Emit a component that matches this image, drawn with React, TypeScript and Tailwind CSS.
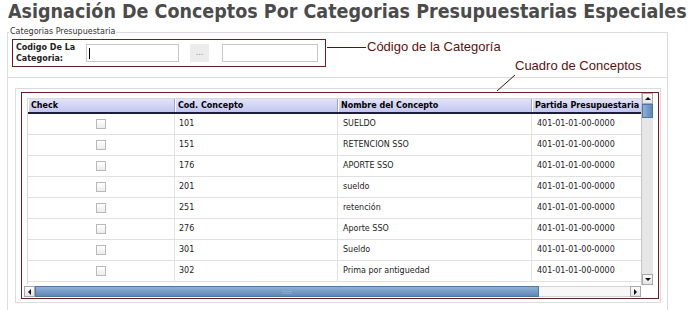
import React from "react";

const rows = [
  { cod: "101", nombre: "SUELDO" },
  { cod: "151", nombre: "RETENCION SSO" },
  { cod: "176", nombre: "APORTE SSO" },
  { cod: "201", nombre: "sueldo" },
  { cod: "251", nombre: "retención" },
  { cod: "276", nombre: "Aporte SSO" },
  { cod: "301", nombre: "Sueldo" },
  { cod: "302", nombre: "Prima por antiguedad" },
];

const headerCell =
  "h-full flex items-center pl-[3px] border-r border-[#9ea2cc] shadow-[inset_1px_0_0_#ffffff] whitespace-nowrap";

const Arrow = ({ dir }: { dir: "up" | "down" | "left" | "right" }) => {
  const pts = {
    up: "1,5 4,2 7,5",
    down: "1,2 4,5 7,2",
    left: "5,1 2,4 5,7",
    right: "2,1 5,4 2,7",
  }[dir];
  return (
    <svg width="8" height="8" viewBox="0 0 8 8">
      <polygon points={pts} fill="#111" />
    </svg>
  );
};

const ScrollBtn = ({ dir }: { dir: "up" | "down" | "left" | "right" }) => (
  <div className="w-[11px] h-[11px] shrink-0 flex items-center justify-center bg-[linear-gradient(#fbfbfb,#e4e4e4)] border border-[#a9a9a9]">
    <Arrow dir={dir} />
  </div>
);

export default function App() {
  return (
    <div
      className="w-[691px] h-[310px] overflow-hidden bg-white text-[#222]"
      style={{ fontFamily: '"DejaVu Sans", Verdana, sans-serif' }}
    >
      <h1
        className="pl-[8px] text-[19.5px] leading-[24px] font-bold text-[#4b4b4b] whitespace-nowrap"
        style={{ fontFamily: '"DejaVu Sans Condensed", "DejaVu Sans", sans-serif' }}
      >
        Asignación De Conceptos Por Categorias Presupuestarias Especiales
      </h1>

      {/* fieldset principal */}
      <div className="relative ml-[7px] mt-[8px] w-[661px] h-[300px] border border-[#dcdcdc]">
        <span className="absolute left-[1px] -top-[6px] bg-white px-[1px] text-[8px] leading-[10px] text-[#333]">
          Categorias Presupuestaria
        </span>

        {/* fila de la categoria */}
        <div className="h-[45px] border-b border-[#dcdcdc] pl-[4px] pt-[6px] flex items-start">
          <div className="w-[314px] h-[28px] border border-[#6e1e1e] flex items-center pl-[3px]">
            <div className="w-[70px] text-[8px] leading-[11px] font-bold text-[#222]">
              Codigo De La
              <br />
              Categoria:
            </div>
            <div className="w-[93px] h-[18px] border border-[#c8c8c8] bg-white flex items-center pl-[2px]">
              <div className="w-[1px] h-[11px] bg-black" />
            </div>
            <div className="ml-[11px] w-[19px] h-[18px] bg-[#ececec] flex items-center justify-center text-[8px] text-[#888]">
              ...
            </div>
            <div className="ml-[13px] w-[96px] h-[18px] border border-[#c8c8c8] bg-white" />
          </div>
          <div
            className="mt-[1px] flex items-center h-[14px] text-[13px] leading-[14px] text-[#5c1212]"
            style={{ fontFamily: '"Liberation Sans", Arial, sans-serif' }}
          >
            <div className="ml-[1px] w-[39px] h-[1px] bg-[#5c1212]" />
            <span className="ml-[1px] whitespace-nowrap">Código de la Categoría</span>
          </div>
        </div>

        {/* callout del cuadro */}
        <span
          className="absolute left-[507px] top-[26px] text-[13px] leading-[14px] text-[#5c1212] whitespace-nowrap"
          style={{ fontFamily: '"Liberation Sans", Arial, sans-serif' }}
        >
          Cuadro de Conceptos
        </span>
        <svg className="absolute left-[488px] top-[41px]" width="20" height="18" viewBox="0 0 20 18">
          <line x1="19" y1="1" x2="1" y2="17" stroke="#3a1010" strokeWidth="1" />
        </svg>

        {/* panel de conceptos */}
        <div className="mt-[10px] ml-[7px] w-[646px] h-[215px] border border-[#dcdcdc] pt-[3px] pl-[5px]">
          <div className="w-[638px] h-[207px] border border-[#6e1e1e]">
            <div className="ml-[2px] w-[629px] flex flex-col">
              <div className="h-[192px] flex">
                {/* cuerpo de la grilla */}
                <div className="w-[617px] pl-[3px] pt-[5px]">
                  <div className="w-[614px] h-[186px] border-l border-t border-[#d8d8d8] overflow-hidden">
                    <div className="h-[15px] flex border-b-2 border-[#1c1c3c] bg-[linear-gradient(#e2e3fa,#c3c6ee)] text-[8px] font-bold text-black">
                      <div className={`${headerCell} w-[147px] shrink-0`}>Check</div>
                      <div className={`${headerCell} w-[163px] shrink-0`}>Cod. Concepto</div>
                      <div className={`${headerCell} w-[194px] shrink-0`}>Nombre del Concepto</div>
                      <div className={`${headerCell} w-[130px] shrink-0`}>Partida Presupuestaria</div>
                    </div>
                    {rows.map((r) => (
                      <div key={r.cod} className="h-[21px] flex border-b border-[#e0e0e0] text-[8px] text-[#222]">
                        <div className="w-[147px] shrink-0 border-r border-[#e4e4e4] flex items-center justify-center">
                          <div className="w-[10px] h-[10px] border border-[#b9b9b9] bg-[linear-gradient(#ffffff,#ececec)]" />
                        </div>
                        <div className="w-[163px] shrink-0 border-r border-[#e4e4e4] flex items-center pl-[4px]">
                          {r.cod}
                        </div>
                        <div className="w-[194px] shrink-0 border-r border-[#e4e4e4] flex items-center pl-[5px] whitespace-nowrap">
                          {r.nombre}
                        </div>
                        <div className="w-[130px] shrink-0 flex items-center pl-[5px] whitespace-nowrap">
                          401-01-01-00-0000
                        </div>
                      </div>
                    ))}
                  </div>
                </div>
                {/* scroll vertical */}
                <div className="w-[12px] flex flex-col bg-[#e6e6e6] border-l border-[#c4c4c4]">
                  <ScrollBtn dir="up" />
                  <div className="h-[14px] bg-[linear-gradient(90deg,#8eb0d6,#5f88b6)] border border-[#4f77a4]" />
                  <div className="flex-1" />
                  <ScrollBtn dir="down" />
                </div>
              </div>
              {/* scroll horizontal */}
              <div className="h-[11px] flex mt-[1px]">
                <ScrollBtn dir="left" />
                <div className="w-[504px] h-[11px] bg-[linear-gradient(#8eb0d6,#5f88b6)] border border-[#4f77a4] flex items-center justify-center">
                  <span className="text-[6px] leading-[6px] text-[#c8d8ea]">:::::</span>
                </div>
                <div className="w-[91px] h-[11px] bg-[#f7f7f7] border-y border-[#d4d4d4]" />
                <ScrollBtn dir="right" />
              </div>
            </div>
          </div>
        </div>
      </div>
    </div>
  );
}
